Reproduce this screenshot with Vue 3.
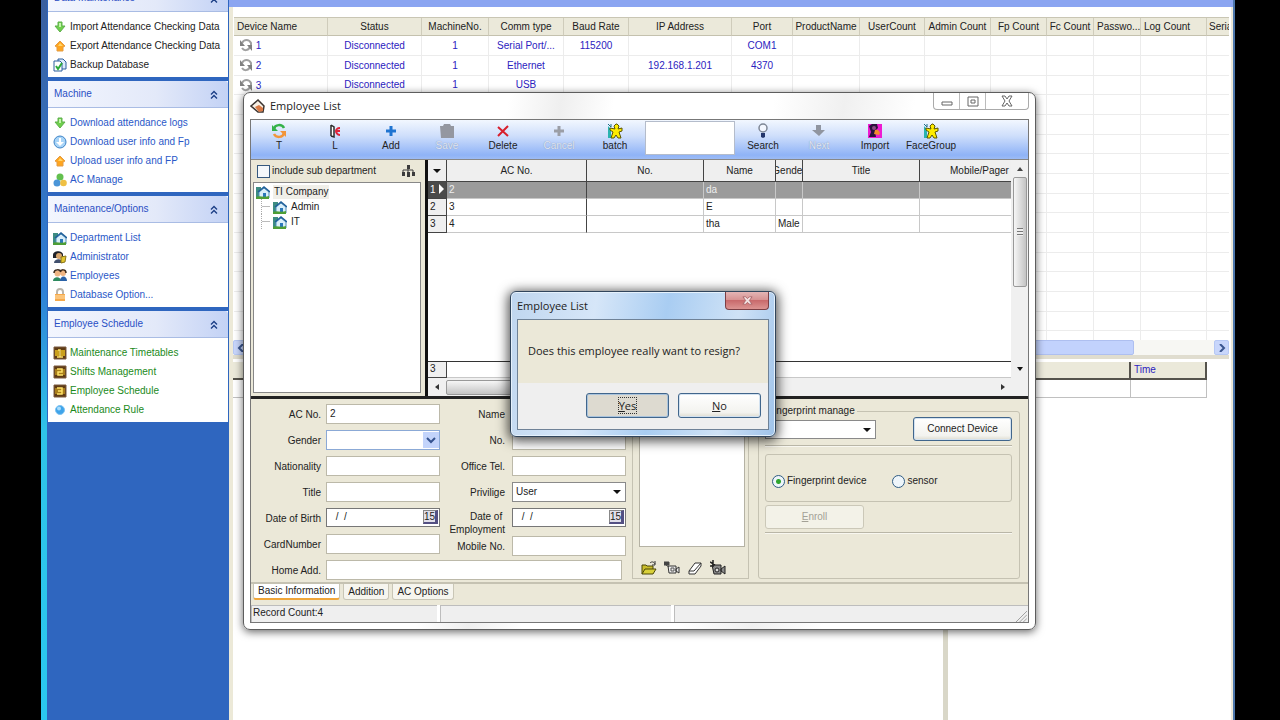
<script setup>
import { ref } from 'vue'

// sidebar groups
const groups = [
  {
    title: 'Data Maintenance',
    tone: 'dark',
    items: [
      { icon: 'down', text: 'Import Attendance Checking Data' },
      { icon: 'up', text: 'Export Attendance Checking Data' },
      { icon: 'backup', text: 'Backup Database' }
    ]
  },
  {
    title: 'Machine',
    tone: 'blue',
    items: [
      { icon: 'down', text: 'Download attendance logs' },
      { icon: 'disc', text: 'Download user info and Fp' },
      { icon: 'up', text: 'Upload user info and FP' },
      { icon: 'balls', text: 'AC Manage' }
    ]
  },
  {
    title: 'Maintenance/Options',
    tone: 'blue',
    items: [
      { icon: 'house', text: 'Department List' },
      { icon: 'admin', text: 'Administrator' },
      { icon: 'people', text: 'Employees' },
      { icon: 'lock', text: 'Database Option...' }
    ]
  },
  {
    title: 'Employee Schedule',
    tone: 'green',
    items: [
      { icon: 'num1', text: 'Maintenance Timetables' },
      { icon: 'num2', text: 'Shifts Management' },
      { icon: 'num3', text: 'Employee Schedule' },
      { icon: 'dot', text: 'Attendance Rule' }
    ]
  }
]

// device list
const deviceCols = [
  { label: 'Device Name', width: 94, left: true },
  { label: 'Status', width: 94 },
  { label: 'MachineNo.', width: 67 },
  { label: 'Comm type', width: 75 },
  { label: 'Baud Rate', width: 65 },
  { label: 'IP Address', width: 103 },
  { label: 'Port', width: 61 },
  { label: 'ProductName', width: 67 },
  { label: 'UserCount', width: 65 },
  { label: 'Admin Count', width: 66 },
  { label: 'Fp Count', width: 56 },
  { label: 'Fc Count', width: 47 },
  { label: 'Passwo...', width: 47, left: true },
  { label: 'Log Count', width: 66, left: true },
  { label: 'Serial No.', width: 48 }
]

const devices = [
  ['1', 'Disconnected', '1', 'Serial Port/...', '115200', '', 'COM1'],
  ['2', 'Disconnected', '1', 'Ethernet', '', '192.168.1.201', '4370'],
  ['3', 'Disconnected', '1', 'USB', '', '', '']
]

const tools = [
  { icon: 'cycle', text: 'T' },
  { icon: 'leave', text: 'L' },
  { icon: 'plus', text: 'Add' },
  { icon: 'save', text: 'Save', off: true },
  { icon: 'cross', text: 'Delete' },
  { icon: 'cancel', text: 'Cancel', off: true },
  { icon: 'batch', text: 'batch' }
]

const toolsAfter = [
  { icon: 'search', text: 'Search' },
  { icon: 'next', text: 'Next', off: true },
  { icon: 'import', text: 'Import' },
  { icon: 'batch', text: 'FaceGroup' }
]

const employeeCols = [
  { label: 'AC No.', width: 140 },
  { label: 'No.', width: 117 },
  { label: 'Name', width: 72 },
  { label: 'Gender', width: 27 },
  { label: 'Title', width: 117 },
  { label: 'Mobile/Pager', width: 120 }
]

const employees = [
  ['2', '', 'da', '', '', ''],
  ['3', '', 'E', '', '', ''],
  ['4', '', 'tha', 'Male', '', '']
]

const tabs = ['Basic Information', 'Addition', 'AC Options']

const activeTab = ref('Basic Information')
const selected = ref(0)
const source = ref('device')
const subDepartments = ref(false)
const dialogOpen = ref(true)
</script>

<template>
  <div class="screen">
    <!-- icon set -->
    <svg class="defs" aria-hidden="true">
      <symbol id="down" viewBox="0 0 14 14">
        <path d="M5 2h4v4h3l-5 6-5-6h3z" fill="#6fd04c" stroke="#5fae4d" />
        <path d="M6 3h2v4H6z" fill="#c4f5ac" />
      </symbol>
      <symbol id="up" viewBox="0 0 14 14">
        <path d="M7 2l5 5-2 1v4H4V8L2 7z" fill="#ffa51f" stroke="#e39c45" />
        <path d="M7 4l3 3H5z" fill="#ffd56b" />
      </symbol>
      <symbol id="backup" viewBox="0 0 14 14">
        <path d="M5 1h5l3 3v7H5z" fill="#dcebfb" stroke="#2c5f9e" />
        <path d="M1 3h6l2 2v8H1z" fill="#fff" stroke="#2c5f9e" />
        <path d="M3 8l2 3 4-6" fill="none" stroke="#2eaa3a" stroke-width="2" />
      </symbol>
      <symbol id="disc" viewBox="0 0 14 14">
        <circle cx="7" cy="7" r="6" fill="#a8d4f7" stroke="#3f85c8" />
        <path d="M6 3h2v4h3L7 11 3 7h3z" fill="#fff" />
      </symbol>
      <symbol id="balls" viewBox="0 0 14 14">
        <circle cx="7" cy="4" r="3.500" fill="#63c04e" />
        <circle cx="4" cy="10" r="3.500" fill="#4a95d8" />
        <circle cx="10.500" cy="10" r="3.300" fill="#efc043" />
      </symbol>
      <symbol id="house" viewBox="0 0 14 14">
        <path d="M0 2h5v11H0z" fill="#3d8c82" />
        <path d="M3 7v6h10V7L8 3z" fill="#d9eefa" stroke="#4f8db8" />
        <path d="M2 7l6-5 6 5" fill="none" stroke="#1f5f9a" stroke-width="1.500" />
        <path d="M7 8h3v4H7z" fill="#2b78b8" />
        <path d="M0 12c3-2 8 1 13-1v3H0z" fill="#4e9e36" />
      </symbol>
      <symbol id="admin" viewBox="0 0 14 14">
        <path d="M0 5c0-5 10-5 10 0v3H0z" fill="#1f2128" />
        <circle cx="6" cy="6" r="3" fill="#d8a56c" />
        <path d="M1 13c0-5 9-5 9 0z" fill="#41506e" />
        <path d="M8 7l5-1-1 6-4 1z" fill="#e3c52e" stroke="#8a751b" />
      </symbol>
      <symbol id="people" viewBox="0 0 14 14">
        <circle cx="4.500" cy="4.500" r="3" fill="#efb583" />
        <circle cx="10" cy="4" r="3" fill="#efb583" />
        <path d="M1 4c0-4 6-4 7-1M7 3c1-3 6-3 6 1" fill="none" stroke="#3c2a1b" stroke-width="1.500" />
        <path d="M0 12c0-5 8-5 8 0z" fill="#2d8a5f" />
        <path d="M7 12c0-6 7-6 7 0z" fill="#2a62a8" />
      </symbol>
      <symbol id="lock" viewBox="0 0 14 14">
        <path d="M4 7V4c0-4 6-4 6 0v3" fill="none" stroke="#b9b4aa" stroke-width="2" />
        <path d="M2 6h10v7H2z" fill="#f6a94a" />
        <path d="M2 8h10M2 10h10" stroke="#ffe0ac" />
      </symbol>
      <symbol id="num1" viewBox="0 0 14 14">
        <path d="M1 1h12v12H1z" fill="#5f3b14" stroke="#7a5a40" />
        <path d="M2 4h4v6H2zM8 4h4v6H8z" fill="#caa01e" />
        <path d="M5 4h2v7M4 11h6" fill="none" stroke="#ffe36a" stroke-width="1.500" />
      </symbol>
      <symbol id="num2" viewBox="0 0 14 14">
        <path d="M1 1h12v12H1z" fill="#5f3b14" stroke="#7a5a40" />
        <path d="M2 4h10v6H2z" fill="#a87d1b" />
        <path d="M4 4h5v3H5v3h5" fill="none" stroke="#ffe36a" stroke-width="1.500" />
      </symbol>
      <symbol id="num3" viewBox="0 0 14 14">
        <path d="M1 1h12v12H1z" fill="#5f3b14" stroke="#7a5a40" />
        <path d="M2 4h10v6H2z" fill="#a87d1b" />
        <path d="M4 4h5v6H4M5 7h4" fill="none" stroke="#ffe36a" stroke-width="1.500" />
      </symbol>
      <symbol id="dot" viewBox="0 0 14 14">
        <circle cx="7" cy="7" r="4.500" fill="#3fa4ea" stroke="#7fc3f2" />
        <circle cx="6" cy="5.500" r="2" fill="#a9dcfb" />
      </symbol>
      <symbol id="chevrons" viewBox="0 0 8 8">
        <path d="M1 4l3-3 3 3M1 8l3-3 3 3" fill="none" stroke="#1c3f86" stroke-width="1.400" />
      </symbol>
      <symbol id="sync" viewBox="0 0 14 14">
        <path d="M3 5c2-4 7-4 9 0v2M11 9c-2 4-6 4-8 1" fill="none" stroke="#a0a0a0" stroke-width="2" />
        <path d="M1 2v6h5zM13 13V7H8z" fill="#808080" />
      </symbol>
      <symbol id="cycle" viewBox="0 0 16 16">
        <path d="M3 6c1-5 8-5 10-1" fill="none" stroke="#35b24a" stroke-width="2.500" />
        <path d="M1 2v6h6z" fill="#35b24a" />
        <path d="M13 10c-1 5-8 5-10 1" fill="none" stroke="#f2953a" stroke-width="2.500" />
        <path d="M15 14V8H9z" fill="#f2953a" />
      </symbol>
      <symbol id="leave" viewBox="0 0 16 16">
        <path d="M4 2v11M4 2l3 2v10l-3-1" fill="#fff" stroke="#2b2b2b" stroke-width="1.500" />
        <path d="M13 5c-3 0-4 2-4 3s1 4 4 4M9 8h4" fill="none" stroke="#e0243a" stroke-width="2" />
      </symbol>
      <symbol id="plus" viewBox="0 0 16 16">
        <path d="M6.500 3h3v3.500H13v3H9.500V13h-3V9.500H3v-3h3.500z" fill="#1f74d1" />
      </symbol>
      <symbol id="cancel" viewBox="0 0 16 16">
        <path d="M6.500 3h3v3.500H13v3H9.500V13h-3V9.500H3v-3h3.500z" fill="#9b9ea6" />
      </symbol>
      <symbol id="save" viewBox="0 0 16 16">
        <path d="M1 3h3l1-2h6l1 2h3v12H2z" fill="#9497a0" />
      </symbol>
      <symbol id="cross" viewBox="0 0 16 16">
        <path d="M3 4l10 9M13 3L3 13" fill="none" stroke="#d81f2c" stroke-width="2" />
      </symbol>
      <symbol id="batch" viewBox="0 0 16 16">
        <path d="M1 3l3 3v9H1z" fill="#2ab3b0" />
        <path d="M1 1l3 3M4 1v3" stroke="#1d6d86" />
        <path d="M10 1l2 2-1 3 4-1v3l-3 1 2 6h-3l-2-3-2 3H4l2-6-3-2V5l5 1-1-3 2-2z" fill="#ffec00" stroke="#5c5600" />
      </symbol>
      <symbol id="search" viewBox="0 0 16 16">
        <circle cx="8" cy="5" r="4" fill="#f3f7ff" stroke="#7e8796" stroke-width="1.500" />
        <path d="M6 10h4v4l-2 1-2-1z" fill="#23366b" />
      </symbol>
      <symbol id="next" viewBox="0 0 16 16">
        <path d="M5 2h5v5h4l-6 6-7-6h4z" fill="#9095a0" />
      </symbol>
      <symbol id="import" viewBox="0 0 16 16">
        <path d="M1 1h14v14H1z" fill="#ee1ad2" />
        <path d="M2 3l3-2h5l1 4-3 3 1 6H2l2-5z" fill="#29113c" />
        <path d="M8 7c4-1 6 3 4 5l-5-1z" fill="#f28b2c" />
        <circle cx="7" cy="5" r="2" fill="#8a4a86" />
      </symbol>
      <symbol id="tree" viewBox="0 0 14 14">
        <path d="M6 1h3v4H6zM1 8h3v4H1zM6 8h3v5H6zM11 8h3v4h-3z" fill="#3c3c3c" />
        <path d="M2 8V6h10v2M7 4v5" fill="none" stroke="#3c3c3c" />
      </symbol>
      <symbol id="app-icon" viewBox="0 0 16 16">
        <path d="M1 8l7-6 6 6-1 6H8z" fill="#f7efe4" stroke="#3c3430" stroke-width="1.500" />
        <path d="M5 9l4-2 4 3v3l-4 1z" fill="#d97b47" />
      </symbol>
      <symbol id="folder" viewBox="0 0 16 16">
        <path d="M1 14V5h4l1 1h6v3" fill="#c9bd2c" stroke="#4a4608" />
        <path d="M1 14l3-5h11l-3 5z" fill="#d8d03a" stroke="#4a4608" />
        <path d="M9 3c2-2 4-1 5 1M14 1v4h-3" fill="none" stroke="#333" />
      </symbol>
      <symbol id="camera" viewBox="0 0 16 16">
        <path d="M4 6h8v7H5zM12 9l3-2v6l-3-2z" fill="#eee" stroke="#333" />
        <path d="M0 2h5v3H0zM2 5l3 2" fill="#444" stroke="#444" />
        <path d="M7 8h3v3H7z" fill="none" stroke="#555" />
      </symbol>
      <symbol id="eraser" viewBox="0 0 16 16">
        <path d="M2 11l6-8h6v3l-6 8H2z" fill="#fff" stroke="#333" />
        <path d="M2 11h5l7-8" fill="none" stroke="#333" />
      </symbol>
      <symbol id="camera2" viewBox="0 0 16 16">
        <path d="M2 5h9v9H4zM11 9l4-3v8l-4-3z" fill="#8b8b8b" stroke="#222" />
        <path d="M0 2l5 3M3 0v5M0 6h4" stroke="#222" stroke-width="1.500" />
        <circle cx="7" cy="10" r="2" fill="#ddd" stroke="#222" />
      </symbol>
    </svg>

    <div class="desktop">
      <!-- sidebar -->
      <nav class="sidebar">
        <section v-for="group in groups" :key="group.title" class="group" :class="group.tone">
          <h2>
            {{ group.title }}
            <svg class="chevrons"><use href="#chevrons" /></svg>
          </h2>
          <ul>
            <li v-for="item in group.items" :key="item.text">
              <svg class="icon"><use :href="'#' + item.icon" /></svg>
              <a href="#">{{ item.text }}</a>
            </li>
          </ul>
        </section>
      </nav>

      <!-- device list and logs -->
      <main class="main">
        <div class="caption"></div>
        <div class="devices">
          <table>
            <colgroup>
              <col v-for="col in deviceCols" :key="col.label" :style="{ width: col.width + 'px' }">
            </colgroup>
            <thead>
              <tr>
                <th v-for="col in deviceCols" :key="col.label" :class="{ left: col.left }">{{ col.label }}</th>
              </tr>
            </thead>
            <tbody>
              <tr v-for="row in 16" :key="row">
                <td v-for="(col, index) in deviceCols" :key="col.label">
                  <svg v-if="index === 0 && devices[row - 1]" class="icon"><use href="#sync" /></svg>
                  {{ devices[row - 1]?.[index] }}
                </td>
              </tr>
            </tbody>
          </table>
        </div>
        <div class="scroll-x">
          <button aria-label="Scroll left">
            <svg viewBox="0 0 8 8"><path d="M6 0L2 4l4 4" /></svg>
          </button>
          <span class="thumb"></span>
          <button aria-label="Scroll right">
            <svg viewBox="0 0 8 8"><path d="M2 0l4 4-4 4" /></svg>
          </button>
        </div>
        <div class="logs">
          <div class="pane"><div class="log-head"></div><div class="log-row"></div></div>
          <div class="pane right">
            <div class="log-head"><span></span><span>Time</span></div>
            <div class="log-row"><span></span><span></span></div>
          </div>
        </div>
      </main>
    </div>

    <!-- employee window -->
    <div class="window">
      <header class="title">
        <svg class="icon"><use href="#app-icon" /></svg>
        <span>Employee List</span>
        <div class="window-buttons">
          <button aria-label="Minimize"><svg viewBox="0 0 12 12"><path d="M1 7h10v3H1z" /></svg></button>
          <button aria-label="Maximize"><svg viewBox="0 0 12 12"><path d="M1 2h10v9H1zM4 5h4v3H4z" /></svg></button>
          <button class="wide" aria-label="Close"><svg viewBox="0 0 12 12"><path d="M1 1h3l2 3 2-3h3L8 6l3 5H8L6 8l-2 3H1l3-5z" /></svg></button>
        </div>
      </header>

      <div class="client">
        <div class="toolbar">
          <button v-for="tool in tools" :key="tool.text" :disabled="tool.off">
            <svg><use :href="'#' + tool.icon" /></svg>
            {{ tool.text }}
          </button>
          <input type="text" aria-label="Search text">
          <button v-for="tool in toolsAfter" :key="tool.text" :disabled="tool.off">
            <svg><use :href="'#' + tool.icon" /></svg>
            {{ tool.text }}
          </button>
        </div>

        <div class="split">
          <div class="departments">
            <div class="department-head">
              <label><input v-model="subDepartments" type="checkbox">include sub department</label>
              <svg class="icon"><use href="#tree" /></svg>
            </div>
            <ul class="tree">
              <li class="root"><svg class="icon"><use href="#house" /></svg><span>TI Company</span></li>
              <li class="child"><svg class="icon"><use href="#house" /></svg><span>Admin</span></li>
              <li class="child"><svg class="icon"><use href="#house" /></svg><span>IT</span></li>
            </ul>
          </div>

          <div class="grid">
            <div class="grid-main">
              <div class="grid-body">
                <table>
                  <colgroup>
                    <col class="row-head">
                    <col v-for="col in employeeCols" :key="col.label" :style="{ width: col.width + 'px' }">
                  </colgroup>
                  <thead>
                    <tr>
                      <th><div><i class="caret"></i></div></th>
                      <th v-for="col in employeeCols" :key="col.label"><div>{{ col.label }}</div></th>
                    </tr>
                  </thead>
                  <tbody>
                    <tr v-for="(row, index) in employees" :key="index" :class="{ selected: selected === index }" @click="selected = index">
                      <th>{{ index + 1 }}<i v-if="selected === index" class="pointer"></i></th>
                      <td v-for="(cell, n) in row" :key="n">{{ cell }}</td>
                    </tr>
                  </tbody>
                </table>
                <div class="grid-foot"><span>3</span></div>
              </div>
              <div class="scroll-y">
                <i class="up"></i>
                <span></span>
                <i class="caret"></i>
              </div>
            </div>
            <div class="grid-scroll"><i class="prev"></i><span></span><i class="forward"></i></div>
          </div>
        </div>

        <div class="form">
          <div class="fields">
            <div class="column">
              <label for="ac">AC No.</label><input id="ac" type="text" value="2">
              <label for="gender">Gender</label>
              <div class="select blue"><select id="gender"><option></option></select><svg viewBox="0 0 10 8"><path d="M1 2l4 4 4-4" /></svg></div>
              <label for="nation">Nationality</label><input id="nation" type="text">
              <label for="title">Title</label><input id="title" type="text">
              <label for="birth">Date of Birth</label>
              <div class="date"><input id="birth" type="text" value=" /  /"><button aria-label="Pick date of birth">15</button></div>
              <label for="card">CardNumber</label><input id="card" type="text">
            </div>
            <div class="column second">
              <label for="name">Name</label><input id="name" type="text">
              <label for="no">No.</label><input id="no" type="text">
              <label for="tel">Office Tel.</label><input id="tel" type="text">
              <label for="priv">Privilige</label>
              <div class="select"><select id="priv"><option>User</option></select><i class="caret"></i></div>
              <label for="hired" class="two-lines">Date of&nbsp;<br>Employment</label>
              <div class="date"><input id="hired" type="text" value=" /  /"><button aria-label="Pick date of employment">15</button></div>
              <label for="mobile">Mobile No.</label><input id="mobile" type="text">
            </div>
            <div class="address">
              <label for="home">Home Add.</label><input id="home" type="text">
            </div>
          </div>

          <div class="photo">
            <div class="picture"></div>
            <div class="photo-tools">
              <button aria-label="Open"><svg><use href="#folder" /></svg></button>
              <button aria-label="Capture"><svg><use href="#camera" /></svg></button>
              <button aria-label="Erase"><svg><use href="#eraser" /></svg></button>
              <button aria-label="Camera"><svg><use href="#camera2" /></svg></button>
            </div>
          </div>

          <fieldset class="fingerprint">
            <legend>Fingerprint manage</legend>
            <div class="connect">
              <div class="select"><select aria-label="Device"><option></option></select><i class="caret"></i></div>
              <button class="button">Connect Device</button>
            </div>
            <hr>
            <div class="sources">
              <label><input v-model="source" type="radio" value="device">Fingerprint device</label>
              <label><input v-model="source" type="radio" value="sensor">sensor</label>
            </div>
            <button class="button enroll" disabled><u>E</u>nroll</button>
            <hr>
          </fieldset>
        </div>

        <div class="tabs">
          <button v-for="tab in tabs" :key="tab" :class="{ active: activeTab === tab }" @click="activeTab = tab">{{ tab }}</button>
        </div>
        <footer class="status">
          <span>Record Count:4</span><span></span><span></span>
          <svg viewBox="0 0 12 12"><path d="M0 12L12 0M4 12l8-8M8 12l4-4" /></svg>
        </footer>
      </div>
    </div>

    <!-- confirmation -->
    <div v-if="dialogOpen" class="dialog" role="dialog" aria-labelledby="dialog-title">
      <header>
        <span id="dialog-title">Employee List</span>
        <button aria-label="Close" @click="dialogOpen = false">
          <svg viewBox="0 0 12 12"><path d="M1 2h3l2 2 2-2h3L8 6l3 4H8L6 8l-2 2H1l3-4z" /></svg>
        </button>
      </header>
      <p>Does this employee really want to resign?</p>
      <div class="actions">
        <button class="button yes" @click="dialogOpen = false"><span><u>Y</u>es</span></button>
        <button class="button" @click="dialogOpen = false"><u>N</u>o</button>
      </div>
    </div>
  </div>
</template>

<style>
body {
  margin: 0;
  background: #000;
}
</style>

<style scoped>
.screen {
  position: relative;
  height: 100vh;
  overflow: hidden;
  background: #000;
  color: #222;
  font-family: "Liberation Sans", Arial, sans-serif;
  font-size: 10px;
  line-height: 14px;
}

.screen * {
  box-sizing: border-box;
}

.defs {
  display: none;
}

button,
input,
select {
  font: inherit;
  color: inherit;
  margin: 0;
  padding: 0;
}

ul {
  list-style: none;
  margin: 0;
  padding: 0;
}

table {
  border-collapse: separate;
  border-spacing: 0;
  table-layout: fixed;
}

.icon {
  width: 14px;
  height: 14px;
  flex: none;
}

.desktop {
  display: flex;
  height: 100%;
  margin: 0 45px 0 41px;
  border-left: 6px solid #2a86d8;
  border-image: linear-gradient(#3a5f9f, #2f7fd6 40%, #2fc4e8 60%, #2ac8f0) 0 0 0 6;
}

/* sidebar */
.sidebar {
  width: 182px;
  flex: none;
  padding: 0 1px;
  background: #2f66bf;
}

.group {
  margin-bottom: 4px;
  background: #fff;
}

.group:first-child {
  margin-top: -15px;
}

.group h2 {
  display: flex;
  align-items: center;
  justify-content: space-between;
  height: 27px;
  margin: 0;
  padding: 0 10px 0 6px;
  border-bottom: 1px solid #a9bce4;
  border-radius: 3px 3px 0 0;
  background: linear-gradient(90deg, #f3f6fe, #e3e9f9 60%, #c3d2f5);
  color: #2a4fc4;
  font-size: 10px;
  font-weight: normal;
}

.chevrons {
  width: 8px;
  height: 9px;
}

.group ul {
  padding: 5px 0 3px 5px;
}

.group li {
  display: flex;
  align-items: center;
  gap: 3px;
  height: 19px;
  white-space: nowrap;
}

.group a {
  color: inherit;
  text-decoration: none;
}

.dark ul {
  color: #222;
}

.blue ul {
  color: #2a58c8;
}

.green ul {
  color: #1b8a1b;
}

/* devices */
.main {
  display: flex;
  flex: 1;
  flex-direction: column;
  min-width: 0;
  padding: 0 4px;
  border-right: 2px solid #4d77ab;
  background: #fff;
  box-shadow: inset 4px 0 #ece9d8, inset -2px 0 #ece9d8;
}

.caption {
  height: 7px;
  margin: 0 -4px;
  background: #8ba5f1;
  flex: none;
}

.devices {
  height: 323px;
  margin-top: 10px;
  margin-left: 1px;
  overflow: hidden;
  border-top: 1px solid #c9c6b4;
  flex: none;
}

.devices table {
  width: 1021px;
}

.devices th {
  height: 18px;
  padding: 0 2px;
  border-right: 1px solid #cfccbb;
  border-bottom: 1px solid #c4c1ae;
  background: #ebe9da;
  font-weight: normal;
  white-space: nowrap;
}

.devices th.left {
  padding-left: 3px;
  text-align: left;
}

.devices td {
  height: 20px;
  padding: 0 2px;
  border-right: 1px solid #ececec;
  border-bottom: 1px solid #ececec;
  color: #2b22c0;
  text-align: center;
  white-space: nowrap;
}

.devices tr:nth-child(3n) td {
  height: 19px;
}

.devices td:first-child {
  padding-left: 5px;
  text-align: left;
}

.devices td .icon {
  vertical-align: -3px;
}

.scroll-x {
  display: flex;
  height: 15px;
  background: #f7f7f3;
  flex: none;
}

.scroll-x button {
  width: 15px;
  border: 1px solid #b6c8f4;
  border-radius: 2px;
  background: #c8d6fb;
}

.scroll-x svg {
  display: block;
  width: 8px;
  height: 8px;
  margin: auto;
}

.scroll-x path {
  fill: none;
  stroke: #3a5690;
  stroke-width: 2;
}

.scroll-x .thumb {
  flex: 1;
  margin-right: 80px;
  border: 1px solid #aebff0;
  border-radius: 2px;
  background: #c2d2fd;
}

.logs {
  display: flex;
  flex: 1;
  gap: 5px;
  border-top: 4px solid #e0ddcf;
  background: #d9d7c8;
}

.pane {
  width: 710px;
  flex: none;
  padding-top: 3px;
  background: #fff;
}

.pane.right {
  flex: 1;
}

.log-head,
.log-row {
  display: flex;
  height: 18px;
  border-bottom: 2px solid #55534c;
  background: #ebe9da;
}

.log-head span {
  width: 183px;
  padding-top: 1px;
  border-right: 2px solid #55534c;
  color: #2b22c0;
}

.log-head span + span,
.log-row span + span {
  width: 76px;
  padding-left: 3px;
}

.right .log-head,
.right .log-row {
  width: 259px;
}

.log-row {
  border-bottom: 1px solid #c0c0c0;
  background: #fff;
}

.log-row span {
  width: 183px;
  border-right: 1px solid #c0c0c0;
}

/* employee window */
.window {
  position: absolute;
  left: 243px;
  top: 92px;
  width: 793px;
  padding: 0 6px 6px;
  border: 1px solid #5d5d5d;
  border-radius: 7px;
  background: linear-gradient(100deg, #fff 30%, #efefef 36%, #fff 42%, #fff 60%, #f0f0f0 68%, #fff 76%);
  box-shadow: 0 2px 8px rgba(0, 0, 0, 0.6);
}

.title {
  display: flex;
  align-items: center;
  gap: 4px;
  height: 26px;
  font-family: "Open Sans", sans-serif;
  font-size: 11px;
}

.title .icon {
  width: 16px;
  height: 16px;
}

.window-buttons {
  display: flex;
  align-self: flex-start;
  height: 17px;
  margin-left: auto;
  border: 1px solid #aaa;
  border-top: 0;
  border-radius: 0 0 4px 4px;
}

.window-buttons button {
  display: grid;
  place-items: center;
  width: 26px;
  border: 0;
  border-right: 1px solid #bbb;
  background: none;
}

.window-buttons .wide {
  width: 42px;
  border-right: 0;
}

.window-buttons svg {
  width: 12px;
  height: 12px;
  fill: #fff;
  stroke: #666;
}

.client {
  border: 1px solid #777;
  background: #ebe8d8;
}

.toolbar {
  display: flex;
  height: 39px;
  background: linear-gradient(#f2f7ff, #cfdffb 40%, #8fb3f7 90%, #9dbcf5);
}

.toolbar button {
  display: flex;
  flex-direction: column;
  align-items: center;
  width: 56px;
  padding-top: 3px;
  border: 0;
  background: none;
  white-space: nowrap;
}

.toolbar button:disabled {
  color: #dfe6f5;
  text-shadow: 0 0 1px #7c87a3;
}

.toolbar svg {
  width: 16px;
  height: 16px;
  flex: none;
}

.toolbar input {
  width: 90px;
  height: 34px;
  margin: 1px 0 0 2px;
  border: 1px solid #b4bccb;
  background: #fff;
}

.split {
  display: flex;
  height: 240px;
  border-top: 1px solid #888;
  border-bottom: 3px solid #222;
}

.departments {
  display: flex;
  flex-direction: column;
  width: 177px;
  padding: 0 4px 3px 2px;
  border-right: 3px solid #111;
  flex: none;
}

.department-head {
  display: flex;
  align-items: center;
  justify-content: space-between;
  height: 22px;
  padding: 0 6px 0 4px;
  flex: none;
}

.department-head label {
  display: flex;
  align-items: center;
  gap: 2px;
}

.department-head input {
  appearance: none;
  width: 13px;
  height: 13px;
  border: 1px solid #35597f;
  background: #f4f8fb;
}

.tree {
  flex: 1;
  padding: 1px 2px;
  border: 1px solid #888;
  background: #fff;
}

.tree li {
  display: flex;
  align-items: center;
  gap: 3px;
  height: 15px;
}

.tree span {
  padding: 0 1px;
}

.tree .root span {
  background: #f0efe9;
}

.tree .child {
  margin-left: 5px;
}

.tree .child::before {
  width: 8px;
  height: 15px;
  border-left: 1px dotted #aaa;
  background: linear-gradient(#bbb, #bbb) 0 50% / 8px 1px no-repeat;
  content: "";
}

.grid {
  display: flex;
  flex: 1;
  flex-direction: column;
  min-width: 0;
  background: #fff;
}

.grid-main {
  display: flex;
  flex: 1;
}

.grid-body {
  display: flex;
  flex: 1;
  flex-direction: column;
  min-width: 0;
  overflow: hidden;
}

.grid table {
  width: 612px;
}

.row-head {
  width: 19px;
}

.grid thead th {
  height: 22px;
  padding: 0;
  border-right: 1px solid #444;
  border-bottom: 1px solid #444;
  background: #efefef;
  font-weight: normal;
}

.grid thead div {
  display: flex;
  align-items: center;
  justify-content: center;
  overflow: hidden;
}

.grid tbody th {
  height: 17px;
  padding: 0 0 0 2px;
  border-right: 1px solid #444;
  border-bottom: 1px solid #444;
  background: #efefef;
  font-weight: normal;
  text-align: left;
  white-space: nowrap;
}

.grid td {
  height: 17px;
  padding: 0 2px;
  border-right: 1px solid #c8c8c8;
  border-bottom: 1px solid #c8c8c8;
  white-space: nowrap;
}

.grid td:nth-child(2) {
  border-right-color: #444;
}

.grid .selected td {
  background: #9b9b9b;
  color: #eee;
}

.grid .selected th {
  background: #4a4a4a;
  color: #fff;
}

.caret {
  display: inline-block;
  border: 4px solid transparent;
  border-top-color: #111;
  border-bottom: 0;
}

.pointer {
  display: inline-block;
  margin-left: 3px;
  border: 5px solid transparent;
  border-left-color: #fff;
  border-right: 0;
  vertical-align: -1px;
}

.grid-foot {
  height: 17px;
  margin-top: auto;
  border-top: 1px solid #333;
  border-bottom: 1px solid #c8c8c8;
}

.grid-foot span {
  display: block;
  width: 19px;
  height: 16px;
  padding-left: 2px;
  border-right: 1px solid #444;
  border-bottom: 1px solid #444;
  background: #efefef;
}

.scroll-y {
  display: flex;
  flex-direction: column;
  align-items: center;
  width: 17px;
  padding: 7px 0;
  background: #f0f0f0;
}

.scroll-y span {
  width: 14px;
  height: 110px;
  margin-top: 6px;
  border: 1px solid #999;
  border-radius: 2px;
  background: repeating-linear-gradient(#777 0 1px, #eee 1px 3px) 50% 50% / 6px 8px no-repeat, linear-gradient(90deg, #f6f6f6, #c4c4c4);
}

.scroll-y .caret {
  margin-top: auto;
  border-width: 4px 3px 0;
}

.up {
  border: 3px solid transparent;
  border-bottom: 4px solid #444;
  border-top: 0;
}

.grid-scroll {
  display: flex;
  align-items: center;
  height: 18px;
  padding: 0 23px 0 7px;
  background: #f0f0f0;
}

.grid-scroll span {
  width: 240px;
  height: 15px;
  margin-left: 7px;
  border: 1px solid #999;
  border-radius: 2px;
  background: linear-gradient(#f6f6f6, #c4c4c4);
}

.prev {
  border: 3px solid transparent;
  border-right: 4px solid #333;
  border-left: 0;
}

.forward {
  margin-left: auto;
  border: 3px solid transparent;
  border-left: 4px solid #333;
  border-right: 0;
}

/* form */
.form {
  display: flex;
  height: 185px;
  padding: 3px 8px 3px 0;
  border-bottom: 2px solid #c5c2b2;
}

.fields {
  display: grid;
  grid-template-columns: 189px 1fr;
  align-content: start;
  width: 376px;
  padding-top: 2px;
  flex: none;
}

.fields input {
  min-width: 0;
  width: 100%;
  height: 20px;
  padding: 0 3px 2px;
  border: 1px solid #bcb9a9;
  background: #fff;
}

.fields label {
  align-self: center;
  padding-top: 2px;
  text-align: right;
  white-space: nowrap;
}

.column {
  display: grid;
  grid-template-columns: 70px 114px;
  grid-auto-rows: 20px;
  align-content: start;
  gap: 6px 5px;
}

.column.second {
  grid-template-columns: 65px 114px;
  grid-template-rows: 20px 20px 20px 20px 22px 20px;
  column-gap: 7px;
}

.fields .two-lines {
  align-self: start;
  line-height: 13px;
}

.address {
  display: grid;
  grid-column: 1 / 3;
  grid-template-columns: 70px 296px;
  gap: 5px;
  margin-top: 4px;
}

.select {
  position: relative;
  height: 20px;
  border: 1px solid #8a8a8a;
  background: #fff;
}

.select select {
  appearance: none;
  display: block;
  width: 100%;
  height: 18px;
  padding: 0 3px;
  border: 0;
  background: none;
}

.select .caret {
  position: absolute;
  right: 4px;
  top: 7px;
}

.select.blue {
  border-color: #8ba9d6;
}

.select.blue svg {
  position: absolute;
  right: 0;
  top: 1px;
  width: 16px;
  height: 16px;
  padding: 3px;
  background: #c3d4fb;
  fill: none;
  stroke: #35538f;
  stroke-width: 2;
  pointer-events: none;
}

.date {
  display: flex;
  height: 19px;
  border: 1px solid #777;
  background: #fff;
}

.date input {
  flex: 1;
  height: 16px;
  padding-left: 6px;
  border: 0;
  white-space: pre;
}

.date button {
  width: 15px;
  margin: 1px 1px 2px;
  border-style: solid;
  border-width: 1px 3px 2px 1px;
  border-color: #888 #545083 #545083 #888;
  background: #e2e0ea;
  line-height: 11px;
}

.photo {
  display: flex;
  flex-direction: column;
  width: 117px;
  margin-left: 5px;
  padding: 4px 3px 0 6px;
  border: 1px solid #c5c2b2;
  flex: none;
}

.picture {
  height: 140px;
  border: 1px solid #b5b2a4;
  background: #fff;
}

.photo-tools {
  display: flex;
  gap: 7px;
  padding: 13px 0 0 2px;
}

.photo-tools button {
  width: 16px;
  height: 16px;
  border: 0;
  background: none;
}

.photo-tools svg {
  display: block;
  width: 16px;
  height: 16px;
}

.fingerprint {
  flex: 1;
  min-width: 0;
  margin: 3px 0 0 9px;
  padding: 0 7px 0 6px;
  border: 1px solid #c5c2b2;
  border-radius: 3px;
}

.fingerprint legend {
  margin-left: 1px;
  padding: 0 2px;
  line-height: 12px;
}

.connect {
  display: flex;
  justify-content: space-between;
  align-items: center;
}

.connect .select {
  width: 111px;
  height: 19px;
}

.connect .select select {
  height: 17px;
}

.button {
  width: 99px;
  height: 24px;
  border: 1px solid #41668c;
  border-radius: 3px;
  background: linear-gradient(#fff, #f3f3ef 80%, #dedcd0);
  box-shadow: inset 0 0 0 1px #d3e2f0;
}

hr {
  margin: 4px 0 7px;
  border: 0;
  border-top: 1px solid #b9b6a7;
  border-bottom: 1px solid #f8f7f0;
}

.sources {
  display: flex;
  align-items: center;
  gap: 26px;
  height: 48px;
  padding: 6px 6px 0;
  border: 1px solid #c5c2b2;
  border-radius: 3px;
}

.sources label {
  display: flex;
  align-items: center;
  gap: 2px;
}

.sources input {
  appearance: none;
  width: 13px;
  height: 13px;
  border: 1px solid #2f5c84;
  border-radius: 50%;
  background: #eef5fa;
}

.sources input:checked {
  background: radial-gradient(circle, #2fa52f 2px, #eef5fa 3px);
}

.enroll {
  display: block;
  margin-top: 3px;
  border-color: #cbc8b8;
  background: #f3f2e8;
  box-shadow: none;
  color: #a3a196;
}

.enroll + hr {
  margin-top: 3px;
}

.tabs {
  display: flex;
  gap: 3px;
  height: 21px;
  padding-left: 2px;
}

.tabs button {
  height: 16px;
  padding: 0 4px;
  border: 1px solid #c9c6b6;
  border-top: 0;
  border-radius: 0 0 3px 3px;
  background: #f6f5ee;
}

.tabs .active {
  border-bottom: 2px solid #f0a63a;
  background: #fff;
}

.status {
  position: relative;
  display: flex;
  gap: 3px;
  height: 17px;
  background: #fff;
}

.status span {
  flex: 1;
  padding-left: 1px;
  border: 1px solid #bdbdbd;
  border-width: 1px 0 0 1px;
  background: #efefef;
}

.status span:first-child {
  flex: 0 0 186px;
}

.status span:nth-child(2) {
  flex: 0 0 231px;
}

.status svg {
  position: absolute;
  right: 1px;
  bottom: 0;
  width: 11px;
  height: 11px;
  stroke: #999;
}

/* dialog */
.dialog {
  position: absolute;
  left: 510px;
  top: 291px;
  width: 266px;
  padding: 0 6px 6px;
  border: 1px solid #31455c;
  border-radius: 6px;
  background: linear-gradient(100deg, #bfd6ef, #d6e6f8 30%, #a9cdf2 55%, #cfe2f6 80%, #9fc3ea);
  box-shadow: 0 2px 12px 2px rgba(0, 0, 0, 0.7), inset 0 0 0 1px #e5f1fc;
  font-family: "Open Sans", sans-serif;
  font-size: 11px;
}

.dialog header {
  display: flex;
  align-items: center;
  justify-content: space-between;
  height: 27px;
}

.dialog header button {
  align-self: flex-start;
  width: 44px;
  height: 18px;
  border: 1px solid #7c3f45;
  border-top: 0;
  border-radius: 0 0 4px 4px;
  background: linear-gradient(#e3b5b5, #d79393 45%, #c96a6c 50%, #dc9492);
}

.dialog header svg {
  display: block;
  width: 11px;
  height: 11px;
  margin: auto;
  fill: #f5e6e6;
  stroke: #a86468;
}

.dialog p {
  height: 64px;
  margin: 0;
  padding: 24px 0 0 10px;
  border: 1px solid #6f8297;
  border-bottom: 0;
  background: #ebe8d8;
  white-space: nowrap;
}

.actions {
  display: flex;
  justify-content: flex-end;
  gap: 9px;
  height: 47px;
  padding: 10px 7px 0 0;
  border: 1px solid #6f8297;
  border-top: 0;
  background: #efefef;
}

.actions .button {
  width: 83px;
  height: 25px;
}

.actions .yes {
  background: #dddad0;
  box-shadow: inset 0 0 0 1px #a9c3dc;
}

.yes span {
  outline: 1px dotted #333;
}
</style>
